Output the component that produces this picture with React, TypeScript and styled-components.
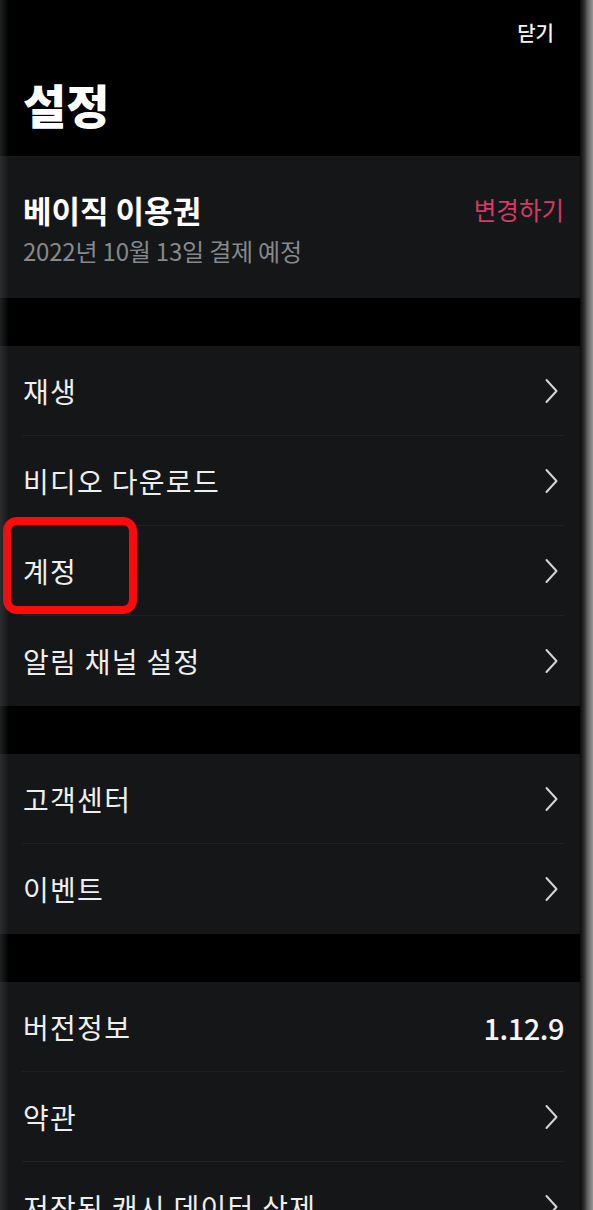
import React from "react";
import styled, { createGlobalStyle } from "styled-components";

const GlobalStyle = createGlobalStyle`
  html, body {
    margin: 0;
    padding: 0;
    background: #000;
    overflow: hidden;
  }
  body {
    font-family: "Noto Sans CJK KR", "Noto Sans", sans-serif;
    color: #f2f2f2;
    -webkit-font-smoothing: antialiased;
  }
`;

const Page = styled.div`
  display: flex;
  width: 593px;
  height: 1210px;
  overflow: hidden;
  background: #000;
`;

const Screen = styled.div`
  position: relative;
  flex: 1;
  display: flex;
  flex-direction: column;
  &::before {
    content: "";
    position: absolute;
    left: 0;
    top: 0;
    bottom: 0;
    width: 9px;
    background: linear-gradient(to right, rgba(70, 72, 74, 0.45), rgba(70, 72, 74, 0));
    pointer-events: none;
    z-index: 3;
  }
`;

const EdgeShade = styled.div`
  width: 13px;
  flex-shrink: 0;
  background: linear-gradient(
    to right,
    #0a0a0a 0%,
    #2c2c2c 30%,
    #6c6c6c 65%,
    #959595 100%
  );
`;

const Header = styled.header`
  display: flex;
  flex-direction: column;
  padding: 19px 16px 22px 23px;
`;

const TopBar = styled.div`
  display: flex;
  justify-content: flex-end;
  height: 28px;
`;

const CloseButton = styled.span`
  font-size: 20px;
  line-height: 28px;
  font-weight: 500;
  color: #f4f4f4;
  margin-right: 10px;
`;

const Title = styled.h1`
  margin: 27px 0 0;
  font-size: 47px;
  line-height: 60px;
  font-weight: 900;
  color: #ffffff;
  letter-spacing: 0;
`;

const Card = styled.section`
  background: #141618;
  display: flex;
  flex-direction: column;
`;

const Gap = styled.div`
  height: 48px;
  background: #000;
  flex-shrink: 0;
`;

const PlanCard = styled(Card)`
  flex-direction: row;
  justify-content: space-between;
  align-items: flex-start;
  padding: 34px 16px 32px 23px;
`;

const PlanInfo = styled.div`
  display: flex;
  flex-direction: column;
  gap: 6px;
`;

const PlanName = styled.div`
  font-size: 31px;
  line-height: 40px;
  font-weight: 700;
  color: #ffffff;
`;

const PlanDate = styled.div`
  font-size: 24px;
  line-height: 30px;
  color: #86898b;
  letter-spacing: -0.2px;
`;

const ChangeLink = styled.span`
  font-size: 24.5px;
  line-height: 40px;
  color: #d63a66;
`;

const Row = styled.div<{ $last?: boolean }>`
  position: relative;
  display: flex;
  align-items: center;
  justify-content: space-between;
  height: 90px;
  box-sizing: border-box;
  padding: 0 16px 0 23px;
  &::after {
    content: "";
    display: ${(p) => (p.$last ? "none" : "block")};
    position: absolute;
    left: 22px;
    right: 16px;
    bottom: 0;
    height: 1px;
    background: #1f2224;
  }
`;

const Label = styled.span`
  font-size: 28px;
  line-height: 36px;
  color: #eeeeee;
  letter-spacing: 1.3px;
`;

const Value = styled.span`
  font-size: 29px;
  line-height: 36px;
  font-weight: 500;
  color: #f4f4f4;
  letter-spacing: -0.5px;
`;

const ChevronWrap = styled.span`
  display: flex;
  margin-right: 5px;
`;

const Highlight = styled.div`
  position: absolute;
  left: 3px;
  top: -9px;
  width: 134px;
  height: 97px;
  box-sizing: border-box;
  border: 8px solid #ff0a0a;
  border-radius: 14px;
  pointer-events: none;
`;

const Chevron = () => (
  <ChevronWrap>
    <svg width="15" height="26" viewBox="0 0 15 26" fill="none">
      <path
        d="M2.5 2 L12.5 13 L2.5 24"
        stroke="#d4d4d4"
        strokeWidth="2"
        strokeLinecap="round"
        strokeLinejoin="round"
      />
    </svg>
  </ChevronWrap>
);

type Item = { label: string; value?: string; highlight?: boolean };

const groups: Item[][] = [
  [
    { label: "재생" },
    { label: "비디오 다운로드" },
    { label: "계정", highlight: true },
    { label: "알림 채널 설정" },
  ],
  [{ label: "고객센터" }, { label: "이벤트" }],
  [
    { label: "버전정보", value: "1.12.9" },
    { label: "약관" },
    { label: "저장된 캐시 데이터 삭제" },
  ],
];

export default function App() {
  return (
    <>
      <GlobalStyle />
      <Page>
        <Screen>
          <Header>
            <TopBar>
              <CloseButton>닫기</CloseButton>
            </TopBar>
            <Title>설정</Title>
          </Header>
          <PlanCard>
            <PlanInfo>
              <PlanName>베이직 이용권</PlanName>
              <PlanDate>2022년 10월 13일 결제 예정</PlanDate>
            </PlanInfo>
            <ChangeLink>변경하기</ChangeLink>
          </PlanCard>
          {groups.map((items, gi) => (
            <React.Fragment key={gi}>
              <Gap />
              <Card>
                {items.map((it, i) => (
                  <Row key={it.label} $last={i === items.length - 1}>
                    <Label>{it.label}</Label>
                    {it.value ? <Value>{it.value}</Value> : <Chevron />}
                    {it.highlight && <Highlight />}
                  </Row>
                ))}
              </Card>
            </React.Fragment>
          ))}
        </Screen>
        <EdgeShade />
      </Page>
    </>
  );
}
